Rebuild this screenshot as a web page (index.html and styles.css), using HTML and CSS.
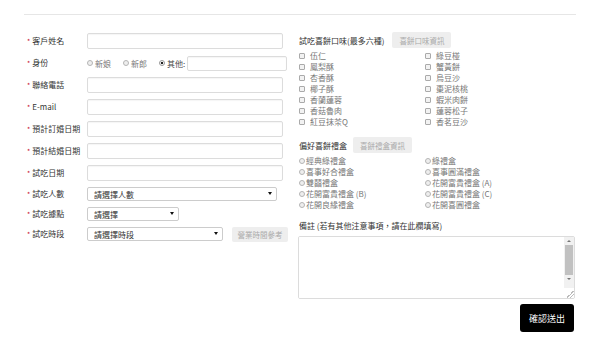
FILE: index.html
```html
<!DOCTYPE html>
<html lang="zh-Hant">
<head>
    <meta charset="UTF-8">
    <title>試吃預約</title>
    <link rel="stylesheet" href="styles.css">
</head>
<body>
    <div class="page">
        <div class="topline"></div>

        <form class="order-form">
            <!-- Left: customer info -->
            <div class="col-left">
                <div class="row">
                    <label class="req"><span class="star">*</span>客戶姓名</label>
                    <input type="text" class="text wide">
                </div>
                <div class="row">
                    <label class="req"><span class="star">*</span>身份</label>
                    <div class="radios">
                        <span class="opt"><span class="radio"></span>新娘</span>
                        <span class="opt"><span class="radio"></span>新郎</span>
                        <span class="opt dark"><span class="radio on"></span>其他:</span>
                        <input type="text" class="text other">
                    </div>
                </div>
                <div class="row">
                    <label class="req"><span class="star">*</span>聯絡電話</label>
                    <input type="text" class="text wide">
                </div>
                <div class="row">
                    <label class="req"><span class="star">*</span>E-mail</label>
                    <input type="text" class="text wide">
                </div>
                <div class="row">
                    <label class="req"><span class="star">*</span>預計訂婚日期</label>
                    <input type="text" class="text wide">
                </div>
                <div class="row">
                    <label class="req"><span class="star">*</span>預計結婚日期</label>
                    <input type="text" class="text wide">
                </div>
                <div class="row">
                    <label class="req"><span class="star">*</span>試吃日期</label>
                    <input type="text" class="text wide">
                </div>
                <div class="row sel-row">
                    <label class="req"><span class="star">*</span>試吃人數</label>
                    <span class="select people"><select><option>請選擇人數</option></select></span>
                </div>
                <div class="row sel-row">
                    <label class="req"><span class="star">*</span>試吃據點</label>
                    <span class="select store"><select><option>請選擇</option></select></span>
                </div>
                <div class="row sel-row">
                    <label class="req"><span class="star">*</span>試吃時段</label>
                    <span class="select time"><select><option>請選擇時段</option></select></span>
                    <button type="button" class="info-btn hours">營業時間參考</button>
                </div>
            </div>

            <!-- Right: flavours, boxes, notes -->
            <div class="col-right">
                <div class="head">
                    <span class="head-label">試吃喜餅口味(最多六種)</span>
                    <button type="button" class="info-btn">喜餅口味資訊</button>
                </div>
                <div class="choices checks">
                    <span class="opt"><span class="box"></span>伍仁</span>
                    <span class="opt"><span class="box"></span>綠豆椪</span>
                    <span class="opt"><span class="box"></span>鳳梨酥</span>
                    <span class="opt"><span class="box"></span>蟹黃餅</span>
                    <span class="opt"><span class="box"></span>杏香酥</span>
                    <span class="opt"><span class="box"></span>烏豆沙</span>
                    <span class="opt"><span class="box"></span>椰子酥</span>
                    <span class="opt"><span class="box"></span>棗泥核桃</span>
                    <span class="opt"><span class="box"></span>香蘭蓮蓉</span>
                    <span class="opt"><span class="box"></span>蝦米肉餅</span>
                    <span class="opt"><span class="box"></span>香菇魯肉</span>
                    <span class="opt"><span class="box"></span>蓮蓉松子</span>
                    <span class="opt"><span class="box"></span>紅豆抹茶Q</span>
                    <span class="opt"><span class="box"></span>香茗豆沙</span>
                </div>

                <div class="head second">
                    <span class="head-label">偏好喜餅禮盒</span>
                    <button type="button" class="info-btn">喜餅禮盒資訊</button>
                </div>
                <div class="choices gifts">
                    <span class="opt"><span class="radio"></span>經典綠禮盒</span>
                    <span class="opt"><span class="radio"></span>綠禮盒</span>
                    <span class="opt"><span class="radio"></span>喜事好合禮盒</span>
                    <span class="opt"><span class="radio"></span>喜事圓滿禮盒</span>
                    <span class="opt"><span class="radio"></span>雙囍禮盒</span>
                    <span class="opt"><span class="radio"></span>花開富貴禮盒 (A)</span>
                    <span class="opt"><span class="radio"></span>花開富貴禮盒 (B)</span>
                    <span class="opt"><span class="radio"></span>花開富貴禮盒 (C)</span>
                    <span class="opt"><span class="radio"></span>花開良緣禮盒</span>
                    <span class="opt"><span class="radio"></span>花開喜圓禮盒</span>
                </div>

                <div class="note-label">備註 (若有其他注意事項，請在此欄填寫)</div>
                <div class="note">
                    <textarea></textarea>
                    <div class="scrollbar">
                        <span class="arrow up"></span>
                        <span class="thumb"></span>
                        <span class="arrow down"></span>
                        <span class="grip"></span>
                    </div>
                </div>

                <div class="actions">
                    <button type="submit" class="submit">確認送出</button>
                </div>
            </div>
        </form>
    </div>
</body>
</html>
```

FILE: styles.css
```css
body {
    margin: 0;
    background: #fff;
    font-family: "Noto Sans CJK TC", "Noto Sans", sans-serif;
    font-size: 8px;
    color: #333;
}

.page {
    padding: 0 24px;
}

.topline {
    margin-top: 14px;
    border-top: 1px solid #e6e6e6;
}

.order-form {
    display: grid;
    grid-template-columns: 274px 278px;
    padding-top: 17px;
}

/* left column */

.col-left {
    display: flex;
    flex-direction: column;
    gap: 6px;
    padding-top: 1px;
}

.row {
    display: flex;
    align-items: center;
    height: 16px;
}

.sel-row {
    height: 14px;
}

.req {
    width: 60px;
    padding-left: 3px;
    line-height: 11px;
    white-space: nowrap;
}

.star {
    color: #c8102e;
    margin-right: 2px;
    font-size: 7px;
}

.text {
    box-sizing: border-box;
    height: 16px;
    border: 1px solid #dcdcdc;
    border-radius: 2px;
    box-shadow: inset 0 1px 1px rgba(0, 0, 0, 0.04);
    padding: 0 4px;
    font-size: 8px;
    margin: 0;
}

.wide {
    width: 196px;
}

.radios {
    display: flex;
    align-items: center;
    height: 16px;
}

.radios .opt {
    margin-right: 12px;
}

.radios .opt.dark {
    margin-right: 2px;
    color: #444;
}

.other {
    width: 100px;
    height: 15px;
}

.opt {
    display: flex;
    align-items: center;
    gap: 2px;
    color: #777;
    white-space: nowrap;
    line-height: 11px;
}

.radio {
    box-sizing: border-box;
    width: 6px;
    height: 6px;
    border: 1px solid #b5b5b5;
    border-radius: 50%;
    background: #eee;
    flex: none;
}

.radio.on {
    background: radial-gradient(circle, #222 0 1.3px, #fff 1.6px);
    border-color: #999;
}

.box {
    box-sizing: border-box;
    width: 6px;
    height: 6px;
    border: 1px solid #aaa;
    border-radius: 1px;
    background: #f2f2f2;
    flex: none;
}

.select {
    position: relative;
    display: inline-block;
    height: 14px;
}

.select select {
    appearance: none;
    box-sizing: border-box;
    width: 100%;
    height: 14px;
    margin: 0;
    padding: 0 6px;
    border: 1px solid #ccc;
    border-radius: 2px;
    background: #fff;
    font-family: inherit;
    font-size: 8px;
    color: #333;
}

.select::after {
    content: "";
    position: absolute;
    right: 5px;
    top: 5px;
    border-left: 2px solid transparent;
    border-right: 2px solid transparent;
    border-top: 3px solid #111;
}

.people {
    width: 190px;
}

.store {
    width: 92px;
}

.time {
    width: 136px;
}

.info-btn {
    height: 16px;
    border: none;
    border-radius: 2px;
    background: #eeeeee;
    color: #aaa;
    font-family: inherit;
    font-size: 7.5px;
    padding: 0 7px;
    white-space: nowrap;
}

.hours {
    height: 15px;
    width: 56px;
    padding: 0;
    margin-left: 9px;
}

/* right column */

.col-right {
    display: flex;
    flex-direction: column;
}

.head {
    display: flex;
    align-items: center;
    gap: 8px;
    height: 16px;
    padding-left: 1px;
}

.head.second {
    gap: 6px;
    margin-top: 10px;
}

.choices {
    display: grid;
    grid-template-columns: 126px 1fr;
    grid-auto-rows: 11px;
    padding-left: 1px;
}

.checks {
    margin-top: 2px;
}

.checks .opt {
    gap: 5px;
    color: #777;
}

.gifts {
    margin-top: 2px;
}

.gifts .opt {
    gap: 1px;
}

.note-label {
    margin-top: 10px;
    padding-left: 1px;
    line-height: 11px;
}

.note {
    display: flex;
    margin-top: 5px;
    width: 277px;
    height: 63px;
    box-sizing: border-box;
    border: 1px solid #dcdcdc;
    border-radius: 2px;
    overflow: hidden;
}

.note textarea {
    flex: 1;
    border: none;
    resize: none;
    outline: none;
    margin: 0;
}

.scrollbar {
    width: 10px;
    display: flex;
    flex-direction: column;
    align-items: center;
    background: #f1f1f1;
}

.arrow {
    width: 0;
    height: 0;
    margin: 3px 0;
    border-left: 2px solid transparent;
    border-right: 2px solid transparent;
}

.arrow.up {
    border-bottom: 2px solid #777;
}

.arrow.down {
    border-top: 2px solid #777;
}

.thumb {
    width: 8px;
    height: 30px;
    background: #c1c1c1;
}

.grip {
    margin-top: auto;
    width: 10px;
    height: 10px;
    background: linear-gradient(135deg, transparent 60%, #bbb 60% 66%, transparent 66% 78%, #bbb 78% 84%, transparent 84%), #fff;
}

.actions {
    display: flex;
    justify-content: flex-end;
    margin-top: 5px;
    padding-right: 2px;
}

.submit {
    width: 54px;
    height: 28px;
    border: none;
    border-radius: 3px;
    background: #000;
    color: #fff;
    font-family: inherit;
    font-size: 9px;
}
```
